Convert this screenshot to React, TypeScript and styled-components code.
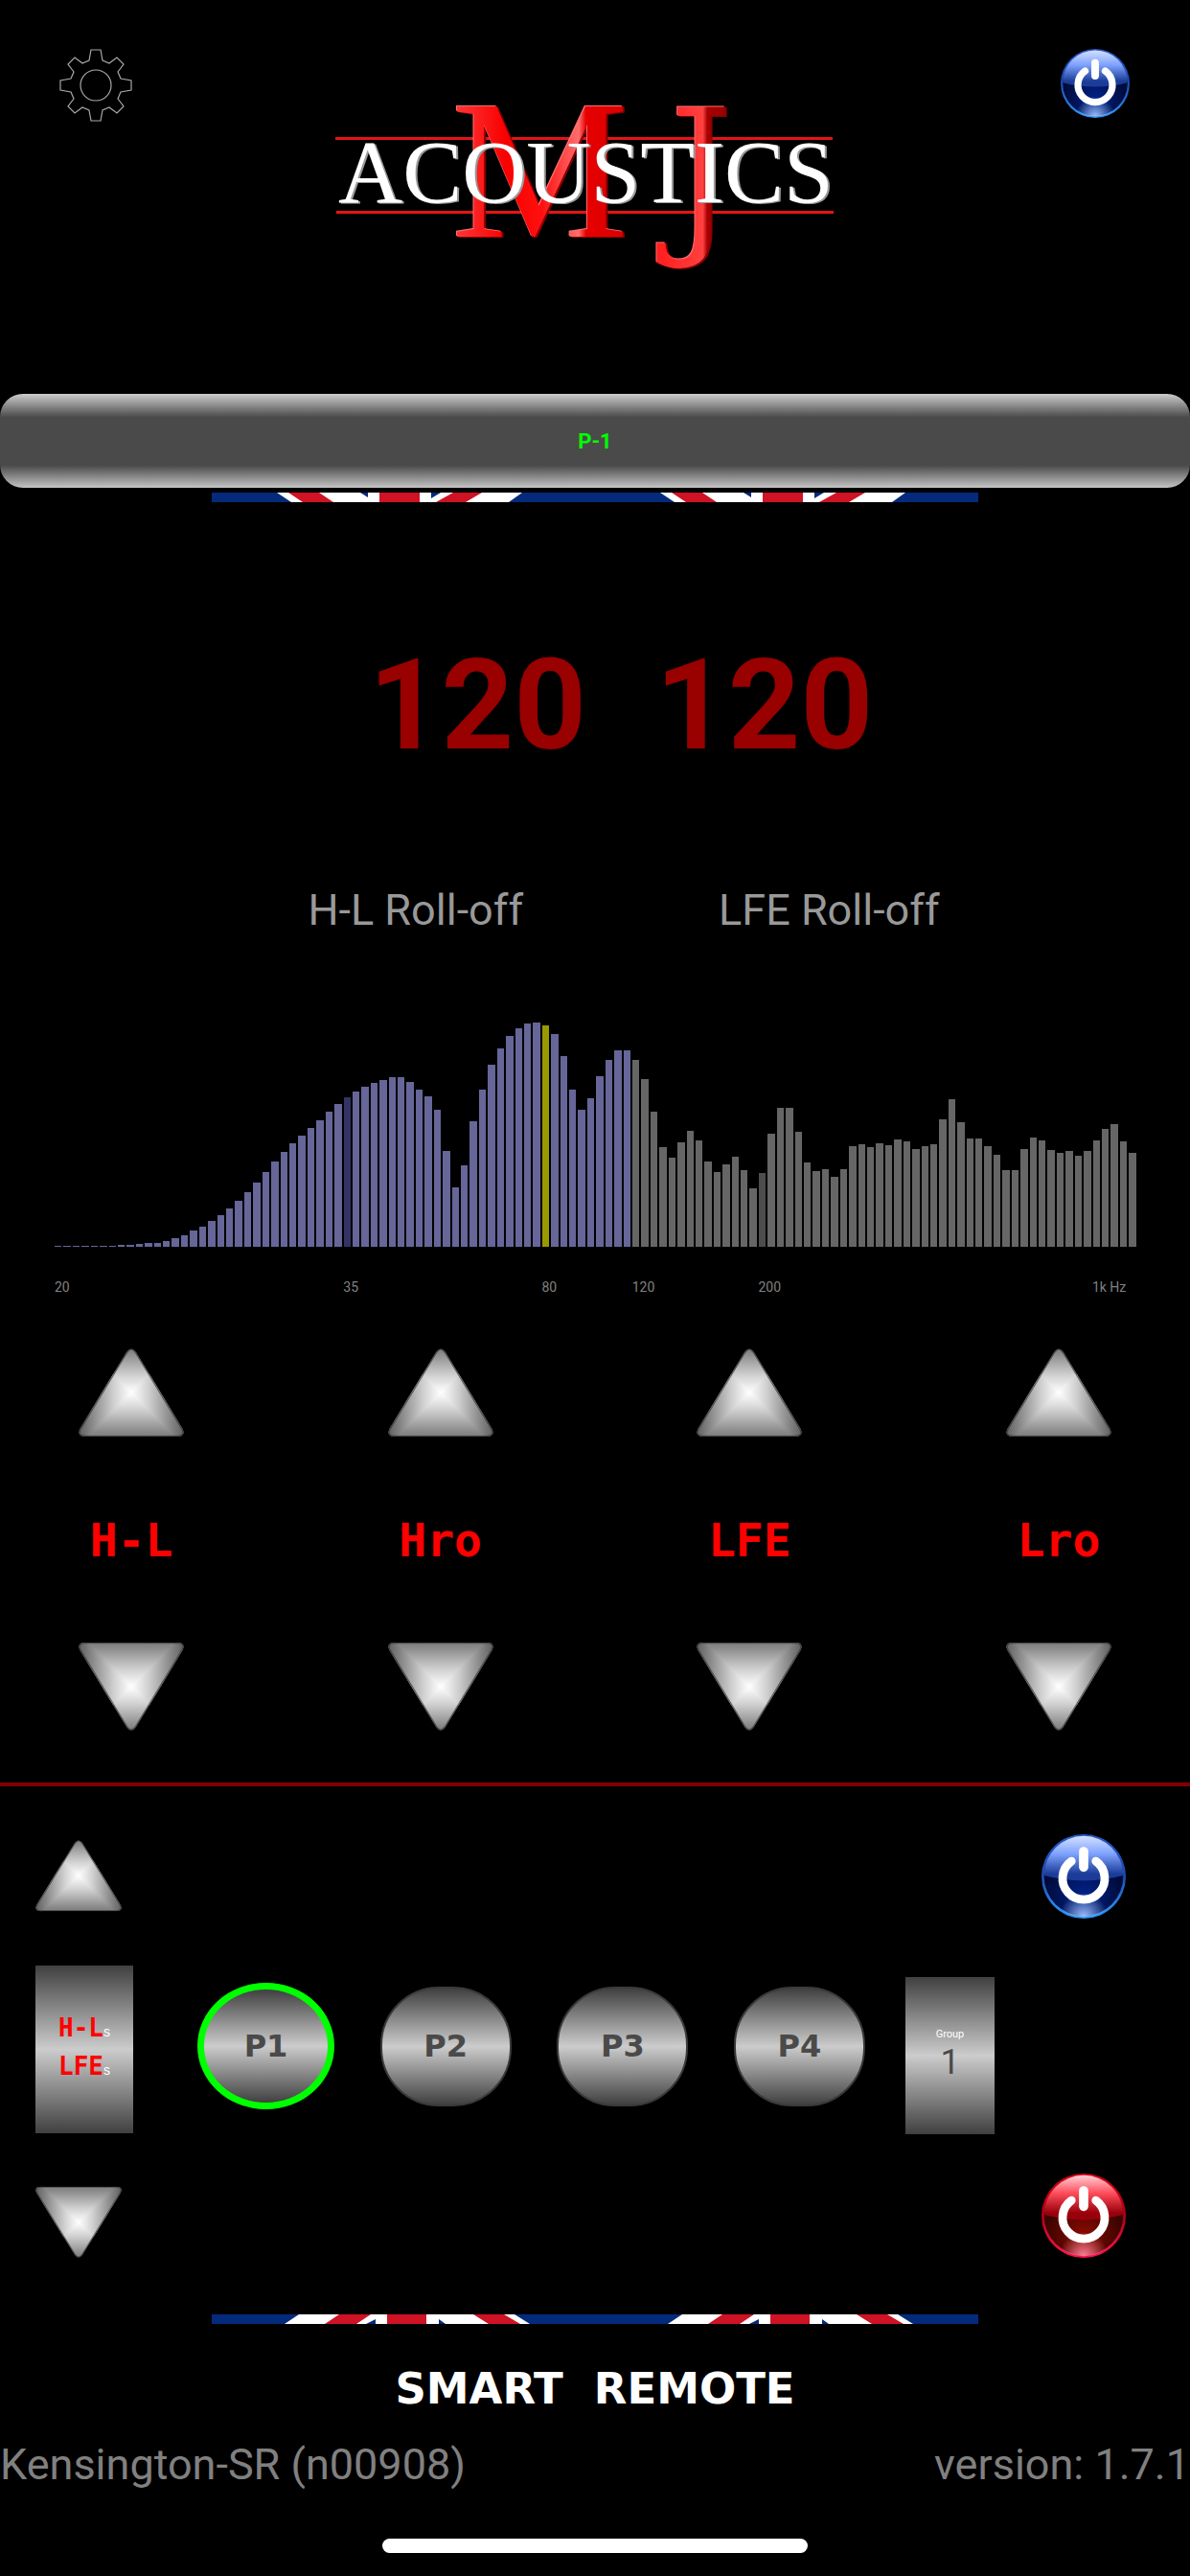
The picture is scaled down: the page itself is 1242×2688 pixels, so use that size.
import React, { FC, useId, useState } from "react";
import styled, { createGlobalStyle } from "styled-components";

const LED_FONT = `"DejaVu Sans Mono", monospace`;
const WIDE_FONT = `"DejaVu Sans", sans-serif`;

const HEIGHTS = [
  1, 1, 1, 1, 1, 1, 1, 2, 2, 3, 4, 4, 6, 9, 12, 17, 21, 27, 33, 40, 48, 57, 67,
  78, 89, 99, 108, 116, 124, 132, 141, 149, 156, 162, 167, 171, 174, 177, 177,
  172, 164, 157, 143, 100, 62, 85, 131, 164, 190, 207, 220, 228, 233, 234, 231,
  222, 199, 164, 143, 155, 178, 195, 205, 205, 195, 175, 141, 104, 93, 109, 121,
  111, 89, 78, 86, 94, 80, 61, 77, 118, 145, 145, 120, 88, 79, 81, 73, 81, 105,
  107, 104, 108, 106, 112, 110, 102, 105, 107, 133, 154, 130, 113, 113, 105, 96,
  80, 80, 102, 114, 111, 101, 98, 100, 95, 100, 111, 123, 128, 110, 98,
];

const TICKS = [
  { label: "20", column: 1 },
  { label: "35", column: 33 },
  { label: "80", column: 55 },
  { label: "120", column: 65 },
  { label: "200", column: 79 },
  { label: "1k Hz", column: 116 },
];

const CONTROLS = ["H-L", "Hro", "LFE", "Lro"];
const PRESETS = ["P1", "P2", "P3", "P4"];

const barColor = (index: number) => {
  if (index === 32) return "#333366";
  if (index === 54) return "#999900";
  if (index === 78) return "#4d4d4d";
  return index < 64 ? "#666699" : "#666666";
};

const GearIcon: FC = () => (
  <svg width="76" height="76" viewBox="-38 -38 76 76" fill="none" stroke="#a8a8a8" strokeWidth="1.2">
    <path d="M-5-37 L5-37 7-26 14-23 22-29 29-22 23-14 26-7 37-5 37 5 26 7 23 14 29 22 22 29 14 23 7 26 5 37 -5 37 -7 26 -14 23 -22 29 -29 22 -23 14 -26 7 -37 5 -37-5 -26-7 -23-14 -29-22 -22-29 -14-23 -7-26Z" />
    <circle r="16" />
  </svg>
);

type PowerIconProps = {
  size: number;
  tone: "blue" | "red";
};

const POWER_TONES = {
  blue: {
    rim: ["#2a55c4", "#1e4bb4", "#2f9cff"],
    gloss: ["#d3e0ff", "#7ea2ff", "#1b3c98"],
    base: ["#000b38", "#00238c"],
    glow: "#9dc0ff",
  },
  red: {
    rim: ["#d40012", "#b00018", "#ff1450"],
    gloss: ["#ffd0d6", "#ff4d5c", "#98000a"],
    base: ["#380400", "#8c0a00"],
    glow: "#ff8096",
  },
};

const PowerIcon: FC<PowerIconProps> = ({ size, tone }) => {
  const id = useId();
  const { rim, gloss, base, glow } = POWER_TONES[tone];
  return (
    <svg width={size} height={size} viewBox="0 0 100 100">
      <defs>
        <linearGradient id={`${id}rim`} x1="0" y1="0" x2="0" y2="1">
          <stop offset="0" stopColor={rim[0]} />
          <stop offset="0.5" stopColor={rim[1]} />
          <stop offset="1" stopColor={rim[2]} />
        </linearGradient>
        <linearGradient id={`${id}gloss`} x1="0" y1="0" x2="0" y2="1">
          <stop offset="0" stopColor={gloss[0]} />
          <stop offset="0.4" stopColor={gloss[1]} />
          <stop offset="0.85" stopColor={gloss[2]} />
        </linearGradient>
        <radialGradient id={`${id}base`} cx="0.5" cy="0.75" r="0.5">
          <stop offset="0" stopColor={base[1]} />
          <stop offset="1" stopColor={base[0]} />
        </radialGradient>
        <radialGradient id={`${id}glow`} cx="0.5" cy="1" r="0.3">
          <stop offset="0" stopColor={glow} />
          <stop offset="1" stopColor={glow} stopOpacity="0" />
        </radialGradient>
      </defs>
      <circle cx="50" cy="50" r="50" fill={`url(#${id}rim)`} />
      <circle cx="50" cy="50" r="47" fill={`url(#${id}base)`} />
      <circle cx="50" cy="50" r="48" fill={`url(#${id}glow)`} />
      <path d="M3 49 A47 47 0 0 1 97 49 Q50 61 3 49Z" fill={`url(#${id}gloss)`} />
      <g fill="none" stroke="#fff" strokeLinecap="round">
        <path d="M35.5 32 A25 25 0 1 0 64.5 32" strokeWidth="10" />
        <path d="M50 20.5 V39" strokeWidth="11" />
      </g>
    </svg>
  );
};

type ArrowIconProps = {
  width: number;
  height: number;
  down?: boolean;
};

const ArrowIcon: FC<ArrowIconProps> = ({ width, height, down }) => {
  const id = useId();
  const outline = "M50 4 Q55 -3 60 4 L108.5 84 Q112 92 103 92 L7 92 Q-2 92 1.5 84Z";
  return (
    <svg width={width} height={height} viewBox="0 0 110 93" preserveAspectRatio="none">
      <defs>
        <clipPath id={`${id}clip`}>
          <path d={outline} />
        </clipPath>
        <linearGradient id={`${id}v`} x1="0" y1="0" x2="0" y2="93" gradientUnits="userSpaceOnUse">
          <stop offset="0.04" stopColor="#858585" />
          <stop offset="0.3" stopColor="#d0d0d0" />
          <stop offset="0.495" stopColor="#ffffff" />
          <stop offset="0.69" stopColor="#d0d0d0" />
          <stop offset="0.95" stopColor="#858585" />
        </linearGradient>
        <linearGradient id={`${id}h`} x1="0" y1="0" x2="110" y2="0" gradientUnits="userSpaceOnUse">
          <stop offset="0.02" stopColor="#666666" />
          <stop offset="0.118" stopColor="#858585" />
          <stop offset="0.336" stopColor="#d0d0d0" />
          <stop offset="0.5" stopColor="#ffffff" />
          <stop offset="0.664" stopColor="#d0d0d0" />
          <stop offset="0.882" stopColor="#858585" />
          <stop offset="0.98" stopColor="#666666" />
        </linearGradient>
      </defs>
      <g clipPath={`url(#${id}clip)`} transform={down ? "matrix(1 0 0 -1 0 93)" : undefined}>
        <path d="M0 0H110V93H0Z" fill={`url(#${id}v)`} />
        <path d="M55 46 L0 -9 V101Z M55 46 L110 -9 V101Z" fill={`url(#${id}h)`} />
        <path d={outline} fill="none" stroke="#333" strokeOpacity="0.7" strokeWidth="2.5" />
      </g>
    </svg>
  );
};

const Logo: FC = () => (
  <LogoSvg viewBox="349 108 546 180" role="img" aria-label="MJ Acoustics">
    <defs>
      <linearGradient id="logo-m" x1="470" y1="0" x2="660" y2="0" gradientUnits="userSpaceOnUse">
        <stop offset="0" stopColor="#ff3c3c" />
        <stop offset="0.3" stopColor="#f80000" />
        <stop offset="0.5" stopColor="#ff1010" />
        <stop offset="0.7" stopColor="#ff6e6e" />
        <stop offset="0.74" stopColor="#e60000" />
        <stop offset="1" stopColor="#d40000" />
      </linearGradient>
      <linearGradient id="logo-j" x1="689" y1="0" x2="756" y2="0" gradientUnits="userSpaceOnUse">
        <stop offset="0" stopColor="#ff2020" />
        <stop offset="0.65" stopColor="#ff4040" />
        <stop offset="0.72" stopColor="#a80000" />
        <stop offset="1" stopColor="#990000" />
      </linearGradient>
    </defs>
    <path d="M349 144.5H868M350 221.5H869" stroke="#e51414" strokeWidth="3" />
    <Monogram x="470" y="247" fontSize="208" fontFamily="Liberation Serif, serif" fill="url(#logo-m)">
      M
    </Monogram>
    <Monogram x="698" y="243" fontSize="180" fontFamily="DejaVu Serif Condensed, DejaVu Serif, serif" fill="url(#logo-j)">
      J
    </Monogram>
    <LogoName x="352" y="211" fontSize="93" fontFamily="Liberation Serif, serif" fill="#fff">
      ACOUSTICS
    </LogoName>
  </LogoSvg>
);

type FlagStripProps = {
  flipped?: boolean;
};

const FlagStrip: FC<FlagStripProps> = ({ flipped }) => {
  const flag = flipped ? (
    <>
      <path d="M91 0H316L332 10H76Z" fill="#fff" />
      <path d="M133 0H166L151 10H118ZM183 0H224V10H183ZM273 0H305L322 10H289Z" fill="#cf1224" />
      <path d="M171 5V10H161ZM237 5V10H244Z" fill="#042a7b" />
    </>
  ) : (
    <>
      <path d="M68 0H324L310 10H83Z" fill="#fff" />
      <path d="M80 0H112L127 10H95ZM175 0H217V10H175ZM252 0H282L265 10H234Z" fill="#cf1224" />
      <path d="M155 0H163V5ZM229 0H239L229 6Z" fill="#042a7b" />
    </>
  );
  return (
    <FlagSvg viewBox="0 0 800 10" aria-hidden="true">
      <path d="M0 0H800V10H0Z" fill="#042a7b" />
      <g>{flag}</g>
      <g transform="translate(400 0)">{flag}</g>
    </FlagSvg>
  );
};

const App: FC = () => {
  const [preset, setPreset] = useState("P1");

  return (
    <Page>
      <GlobalStyle />
      <Header>
        <IconButton aria-label="Settings">
          <GearIcon />
        </IconButton>
        <Logo />
        <IconButton aria-label="Power">
          <PowerIcon size={72} tone="blue" />
        </IconButton>
      </Header>

      <StatusBar>P-1</StatusBar>
      <FlagStrip />

      <Readouts>
        <Reading>120</Reading>
        <Reading>120</Reading>
      </Readouts>
      <ReadoutLabels>
        <span>H-L Roll-off</span>
        <span>LFE Roll-off</span>
      </ReadoutLabels>

      <Chart>
        <Bars>
          {HEIGHTS.map((height, index) => (
            <Bar key={index} $color={barColor(index)} style={{ height }} />
          ))}
        </Bars>
        <Axis>
          {TICKS.map((tick) => (
            <Tick key={tick.label} $column={tick.column}>
              {tick.label}
            </Tick>
          ))}
        </Axis>
      </Chart>

      <Controls>
        {CONTROLS.map((name) => (
          <Control key={name}>
            <IconButton aria-label={`${name} up`}>
              <ArrowIcon width={110} height={93} />
            </IconButton>
            <ControlName>{name}</ControlName>
            <IconButton aria-label={`${name} down`}>
              <ArrowIcon width={110} height={93} down />
            </IconButton>
          </Control>
        ))}
      </Controls>

      <Panel>
        <LevelColumn>
          <IconButton aria-label="Level up">
            <ArrowIcon width={90} height={75} />
          </IconButton>
          <LevelBox>
            <LevelLine>
              H-L<small>s</small>
            </LevelLine>
            <LevelLine>
              LFE<small>s</small>
            </LevelLine>
          </LevelBox>
          <IconButton aria-label="Level down">
            <ArrowIcon width={90} height={75} down />
          </IconButton>
        </LevelColumn>
        <Presets>
          {PRESETS.map((name) => (
            <PresetButton
              key={name}
              $active={name === preset}
              aria-pressed={name === preset}
              onClick={() => setPreset(name)}
            >
              {name}
            </PresetButton>
          ))}
        </Presets>
        <GroupButton>
          <small>Group</small>
          <span>1</span>
        </GroupButton>
        <PowerColumn>
          <IconButton aria-label="Power on">
            <PowerIcon size={88} tone="blue" />
          </IconButton>
          <IconButton aria-label="Power off">
            <PowerIcon size={88} tone="red" />
          </IconButton>
        </PowerColumn>
      </Panel>

      <FlagStrip flipped />
      <Brand>
        <span>SMART</span>
        <span>REMOTE</span>
      </Brand>
      <Footer>
        <span>Kensington-SR (n00908)</span>
        <span>version: 1.7.1</span>
      </Footer>
      <HomeIndicator />
    </Page>
  );
};

const GlobalStyle = createGlobalStyle`
  * {
    box-sizing: border-box;
  }
  body {
    margin: 0;
    background: #000;
    font-family: Roboto, sans-serif;
  }
  svg {
    display: block;
  }
`;

const Page = styled.main`
  display: flex;
  flex-direction: column;
  padding-bottom: 24px;
`;

const Header = styled.header`
  display: flex;
  align-items: flex-start;
  justify-content: space-between;
  padding: 51px 63px 123px 62px;
`;

const LogoSvg = styled.svg`
  width: 546px;
  height: 180px;
  margin-top: 57px;
  overflow: visible;
`;

const Monogram = styled.text`
  filter: drop-shadow(-1px -1px 0 #ff7070) drop-shadow(2px 1px 0 #8c0000);
`;

const LogoName = styled.text`
  filter: drop-shadow(2px 1px 0 #999999);
`;

const IconButton = styled.button`
  padding: 0;
  border: 0;
  background: none;
  cursor: pointer;
`;

const StatusBar = styled.div`
  display: flex;
  align-items: center;
  justify-content: center;
  height: 98px;
  border-radius: 24px;
  background: linear-gradient(#cccccc, #4a4a4a 25%, #4a4a4a 76%, #c4c4c4);
  color: #00ff00;
  font-size: 22px;
  font-weight: 700;
`;

const FlagSvg = styled.svg`
  width: 800px;
  max-width: 100%;
  margin: 5px auto 0;
`;

const Readouts = styled.div`
  display: flex;
  justify-content: center;
  gap: 72px;
  margin-top: 132px;
  padding-left: 54px;
`;

const Reading = styled.output`
  color: #990000;
  font-family: Roboto, sans-serif;
  font-size: 132px;
  font-weight: 700;
  line-height: 160px;
`;

const ReadoutLabels = styled.div`
  display: flex;
  justify-content: center;
  gap: 204px;
  margin-top: 108px;
  padding-left: 60px;
  color: #999999;
  font-size: 45px;
  line-height: 52px;
`;

const Chart = styled.section`
  margin-top: 85px;
  padding: 0 57px;
`;

const Bars = styled.div`
  display: flex;
  align-items: flex-end;
  gap: 2px;
  height: 240px;
`;

const Bar = styled.div<{ $color: string }>`
  flex: 1;
  background: ${(props) => props.$color};
`;

const Axis = styled.div`
  display: grid;
  grid-template-columns: repeat(120, minmax(0, 1fr));
  column-gap: 2px;
  margin-top: 34px;
  color: #808080;
  font-size: 14px;
  line-height: 16px;
`;

const Tick = styled.span<{ $column: number }>`
  grid-row: 1;
  grid-column: ${(props) => props.$column};
  white-space: nowrap;
`;

const Controls = styled.section`
  display: flex;
  justify-content: space-between;
  margin-top: 56px;
  padding: 0 82px 54px;
  border-bottom: 4px solid #800000;
`;

const Control = styled.div`
  display: flex;
  flex-direction: column;
  align-items: center;
  justify-content: space-between;
  width: 110px;
  height: 399px;
`;

const ControlName = styled.span`
  color: #ff0000;
  font-family: ${LED_FONT};
  font-size: 48px;
  font-weight: 700;
  line-height: 56px;
`;

const Panel = styled.section`
  display: flex;
  align-items: center;
  padding: 50px 67px 54px 37px;
`;

const LevelColumn = styled.div`
  display: flex;
  flex-direction: column;
  align-items: flex-start;
  align-self: stretch;
  justify-content: space-between;
  padding-top: 6px;
`;

const LevelBox = styled.div`
  display: flex;
  flex-direction: column;
  justify-content: center;
  width: 102px;
  height: 175px;
  padding-left: 24px;
  background: linear-gradient(#404040, #cccccc 50%, #404040);
`;

const LevelLine = styled.span`
  color: #ff0000;
  font-family: ${LED_FONT};
  font-size: 26px;
  font-weight: 700;
  line-height: 36px;

  small {
    color: #fff;
    font-family: "Liberation Sans", sans-serif;
    font-size: 14px;
    font-weight: 400;
  }
`;

const Presets = styled.div`
  display: flex;
  flex: 1;
  align-items: center;
  justify-content: space-between;
  padding: 0 42px 0 67px;
`;

const PresetButton = styled.button<{ $active: boolean }>`
  width: ${(props) => (props.$active ? 143 : 137)}px;
  height: ${(props) => (props.$active ? 132 : 125)}px;
  padding: 0;
  border: ${(props) => (props.$active ? "7px solid #00ff00" : "2px solid #3a3a3a")};
  border-radius: ${(props) => (props.$active ? "50%" : "61px")};
  background: linear-gradient(#404040, #cccccc 50%, #404040);
  color: #4a4a4a;
  font-family: ${WIDE_FONT};
  font-size: 32px;
  font-weight: 700;
  cursor: pointer;
`;

const GroupButton = styled.button`
  display: flex;
  flex-direction: column;
  align-items: center;
  justify-content: center;
  width: 93px;
  height: 164px;
  margin-top: 20px;
  padding: 0;
  border: 0;
  background: linear-gradient(#404040, #cccccc 50%, #404040);
  color: #4a4a4a;
  font-family: Roboto, sans-serif;
  font-size: 36px;
  line-height: 44px;
  cursor: pointer;

  small {
    color: #fff;
    font-size: 11px;
    line-height: 14px;
  }
`;

const PowerColumn = styled.div`
  display: flex;
  flex-direction: column;
  justify-content: space-between;
  height: 442px;
  margin-left: 49px;
`;

const Brand = styled.h1`
  display: flex;
  justify-content: center;
  gap: 32px;
  margin: 46px 0 0;
  color: #fff;
  font-family: ${WIDE_FONT};
  font-size: 45px;
  font-weight: 700;
  line-height: 44px;
`;

const Footer = styled.footer`
  display: flex;
  justify-content: space-between;
  margin-top: 31px;
  color: #808080;
  font-size: 45px;
  line-height: 52px;
`;

const HomeIndicator = styled.div`
  align-self: center;
  width: 444px;
  height: 15px;
  margin-top: 51px;
  border-radius: 8px;
  background: #fff;
`;

export default App;
